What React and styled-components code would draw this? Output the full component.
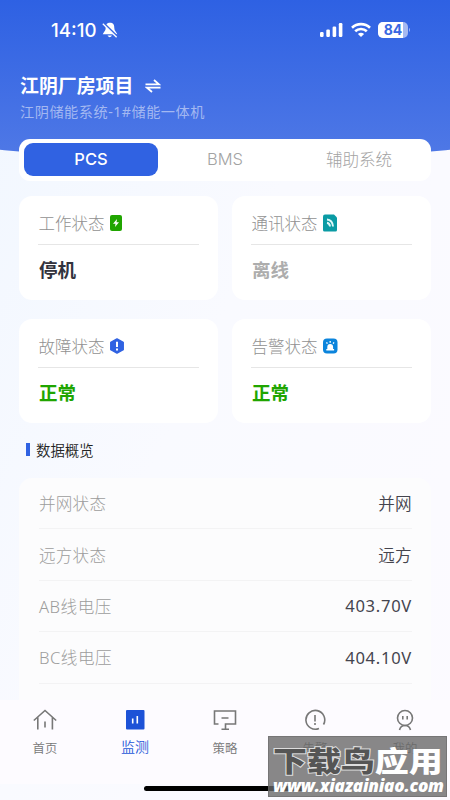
import React from 'react'
import styled, { createGlobalStyle } from 'styled-components'

const GlobalStyle = createGlobalStyle`
  * {
    box-sizing: border-box;
  }

  body {
    margin: 0;
    font-family: "Noto Sans", "Noto Sans CJK SC", sans-serif;
    color: #33333d;
  }
`

const Main = styled.main`
  position: relative;
  display: flex;
  flex-direction: column;
  width: 450px;
  height: 800px;
  overflow: hidden;
  white-space: nowrap;
  background: linear-gradient(115deg, #f1f7ff 0%, #f9faff 45%, #fcfaff 100%);
`

const Header = styled.header`
  flex: none;
  height: 161px;
  margin: 0 -150px;
  padding: 0 170px;
  background: linear-gradient(180deg, #2e61e3 0%, #5079e6 100%);
  clip-path: ellipse(2250px 2250px at 50% -2089px);
`

const StatusBar = styled.div`
  display: flex;
  align-items: center;
  height: 60px;
  padding: 0 19px 0 31px;
  color: white;
`

const Clock = styled.span`
  width: 47px;
  margin-right: 4px;
  font-family: Inter, "Liberation Sans", sans-serif;
  font-size: 18.7px;
  font-weight: 500;
`

const StatusIcons = styled.div`
  display: flex;
  align-items: center;
  gap: 7px;
  margin-left: auto;
`

const Project = styled.h1`
  display: flex;
  align-items: center;
  gap: 12px;
  height: 28px;
  margin: 12px 0 0;
  font-size: 18.9px;
  line-height: 28px;
  color: white;
`

const System = styled.p`
  margin: 1px 0 0;
  font-size: 14.2px;
  line-height: 22px;
  letter-spacing: 0.5px;
  color: #a3b8f1;
`

const Content = styled.div`
  flex: 1;
  min-height: 0;
  margin-top: -22px;
  padding: 0 19px;
  overflow: hidden;
  z-index: 1;
`

const Tabs = styled.div`
  display: grid;
  grid-template-columns: repeat(3, 134px);
  height: 42px;
  padding: 4px 5px 5px;
  border-radius: 11px;
  background: white;
`

const Tab = styled.button`
  padding: 0 0 2px;
  border: 0;
  border-radius: 9px;
  font-family: Inter, "Noto Sans CJK SC", sans-serif;
  font-size: 16.5px;
  font-weight: ${(props) => (props.$active ? 500 : 300)};
  color: ${(props) => (props.$active ? 'white' : '#a3a3a3')};
  background: ${(props) => (props.$active ? '#3062e2' : 'transparent')};
`

const Cards = styled.div`
  display: grid;
  grid-template-columns: 199px 199px;
  gap: 19px 14px;
  margin-top: 15px;
`

const Card = styled.section`
  height: 104px;
  padding: 12px 19px 0;
  border-radius: 13px;
  background: white;
`

const CardLabel = styled.div`
  display: flex;
  align-items: center;
  gap: 4px;
  height: 30px;
  padding-left: 0.5px;
  font-size: 16.5px;
  font-weight: 300;
  color: #919191;
`

const CardValue = styled.div`
  margin-top: 6px;
  padding: 11px 0 0 1px;
  border-top: 1px solid #e6e6e6;
  font-size: 18.5px;
  font-weight: 700;
  line-height: 28px;
  color: ${(props) => props.$color};
`

const SectionTitle = styled.h2`
  display: flex;
  align-items: center;
  gap: 6px;
  height: 24px;
  margin: 14px 0 0;
  padding-left: 7px;
  font-size: 14.4px;
  font-weight: 350;
  color: #222;

  &::before {
    content: '';
    width: 4px;
    height: 13px;
    background: #3062e2;
  }
`

const List = styled.div`
  margin-top: 17px;
  padding: 0 19px 0 20px;
  border-radius: 13px 13px 0 0;
  background: #fcfcfd;
`

const Row = styled.div`
  display: flex;
  align-items: center;
  justify-content: space-between;
  height: 51.4px;
  border-bottom: 1px solid #f3f3f4;
  font-size: 16.6px;
  color: #44444e;
`

const RowLabel = styled.span`
  font-weight: 300;
  letter-spacing: ${(props) => (props.$numeric ? '0.5px' : '0.2px')};
  color: #9c9c9c;
`

const RowValue = styled.span`
  font-weight: ${(props) => (props.$numeric ? 400 : 350)};
  letter-spacing: ${(props) => (props.$numeric ? '0.7px' : '0.3px')};
`

const Nav = styled.nav`
  display: grid;
  grid-template-columns: repeat(5, 90px);
  flex: none;
  height: 84px;
  padding-top: 9px;
  background: #fdfbff;
`

const NavItem = styled.div`
  display: flex;
  flex-direction: column;
  align-items: center;
  font-size: ${(props) => (props.$active ? '14px' : '12.4px')};
  font-weight: 350;
  line-height: 24px;
  color: ${(props) => (props.$active ? '#2457d8' : '#777')};

  span {
    margin-top: ${(props) => (props.$active ? '4px' : '6px')};
  }
`

const HomeBar = styled.div`
  flex: none;
  width: 162px;
  height: 5px;
  margin: 2px auto 9px;
  border-radius: 3px;
  background: black;
`

const Watermark = styled.div`
  position: absolute;
  z-index: 2;
  left: 268px;
  top: 736px;
  width: 179px;
  height: 61px;
  background: rgba(104, 104, 104, 0.79);
  border: 1px solid rgba(100, 100, 100, 0.5);
`

const Brand = styled.div`
  width: 141px;
  height: 40px;
  margin-left: 4px;
  font-family: "Noto Sans CJK SC", sans-serif;
  font-size: 28.5px;
  font-weight: 900;
  line-height: 45px;
  color: white;
  transform: scaleX(1.19);
  transform-origin: left;

  span {
    color: #555;
    paint-order: stroke fill;
    -webkit-text-stroke: 2px #ddd;
  }
`

const Site = styled.div`
  padding-left: 4px;
  font-family: "Open Sans", sans-serif;
  font-size: 17.2px;
  font-style: italic;
  font-weight: 800;
  line-height: 18px;
  letter-spacing: -0.25px;
  color: white;
`

const line = {
  fill: 'none',
  stroke: 'currentColor',
  strokeWidth: 1.6,
}

const BellOff = () => (
  <svg width="16" height="17" viewBox="0 0 16 17">
    <path d="M8 .8C4.500.8 3.700 3 3.700 6c0 3-2 3.700-3 6.300h14.600c-1-2.600-3-3.300-3-6.300 0-3-.800-5.200-4.300-5.200z" fill="white" />
    <path d="M5.500 13.500h4.500q-2.200 3.400-4.500 0" fill="white" />
    <path d="M1.700 1.300l14 13.500" stroke="#3968e2" strokeWidth="2" />
    <path d="M.8 1.800l13.800 13.500" stroke="white" strokeWidth="1.300" />
  </svg>
)

const Signal = () => (
  <svg width="24" height="16" viewBox="0 0 24 16" fill="white">
    <rect x="0" y="10" width="3.6" height="5" rx="1.2" />
    <rect x="6.3" y="7.5" width="3.6" height="7.5" rx="1.2" />
    <rect x="12.6" y="4.5" width="3.6" height="10.5" rx="1.2" />
    <rect x="18.8" y="1" width="3.6" height="14" rx="1.2" />
  </svg>
)

const Wifi = () => (
  <svg width="20" height="16" viewBox="0 0 20 16" fill="none" stroke="white" strokeWidth="2.6">
    <path d="M1 5.7a13 13 0 0 1 18 0" />
    <path d="M4.2 9.3a8.3 8.3 0 0 1 11.6 0" />
    <path d="M6.9 12q3.1-2.4 6.2 0L10 15z" fill="white" stroke="none" />
  </svg>
)

const Battery = () => (
  <svg width="33" height="16" viewBox="0 0 33 16">
    <rect width="30" height="16" rx="5" fill="#a5b9f1" />
    <path d="M5 0h20v16H5a5 5 0 0 1-5-5V5a5 5 0 0 1 5-5z" fill="white" />
    <path d="M31 5.7q2 2.2 0 4.4z" fill="#a5b9f1" />
    <text x="15" y="13.1" textAnchor="middle" fontFamily="Inter" fontSize="14" fontWeight="700" fill="#3968e2">84</text>
  </svg>
)

const Swap = () => (
  <svg width="16" height="14" viewBox="0 0 16 14" fill="none" stroke="white" strokeWidth="1.8">
    <path d="M.5 5.4h13.500L9 1M15.500 8.700H2L7 13" />
  </svg>
)

const WorkIcon = () => (
  <svg width="14" height="16" viewBox="0 0 14 16">
    <rect x="1" width="12" height="16" rx="2" fill="#20a500" />
    <path d="M8 4L4 8.7h2.5L6 12l4-4.8H7.5z" fill="white" />
  </svg>
)

const LinkIcon = () => (
  <svg width="16" height="18" viewBox="0 0 16 18">
    <path d="M3 .5h9l3 3V16q0 1.5-1.5 1.5h-11Q1 17.500 1 16V2.500Q1 .5 3 .5z" fill="#0a9ba4" />
    <path d="M5 5.500q5.500.5 6 7M5 8.700q2.700.5 3 3.800" fill="none" stroke="#dff8f8" strokeWidth="1.9" />
  </svg>
)

const FaultIcon = () => (
  <svg width="16" height="16" viewBox="0 0 16 16">
    <path d="M8 .9l6.200 3.400v7.400L8 15.100l-6.200-3.400V4.300z" fill="#3062e2" stroke="#3062e2" strokeWidth="1.500" strokeLinejoin="round" />
    <path d="M8 3.800v5.200M8 10.500v2" stroke="white" strokeWidth="2" />
  </svg>
)

const AlarmIcon = () => (
  <svg width="16" height="16" viewBox="0 0 16 16">
    <rect x="1" y="0.500" width="14.500" height="15" rx="4" fill="#0b84dc" />
    <path d="M5.300 11V9a2.900 2.900 0 0 1 5.800 0v2h1v1.400H4.300V11z" fill="white" />
    <path d="M8.200 3v1.700M4.500 4.300l.9 1.300M12 4.300l-.9 1.300" stroke="white" strokeWidth="1.300" />
  </svg>
)

const HomeIcon = () => (
  <svg width="24" height="22" viewBox="0 0 24 22" {...line}>
    <path d="M.8 11.500L12 1.500l11.200 10M4.800 8.500V20.500M19.400 8.500V20.500M12 12.500V18.500" />
  </svg>
)

const MonitorIcon = () => (
  <svg width="20" height="22" viewBox="0 0 20 22">
    <rect x="1" y="1" width="18.500" height="19.500" rx="1" fill="#1d52d7" />
    <path d="M7.700 9.500v5M12.300 7v7.500" stroke="white" strokeWidth="1.600" />
  </svg>
)

const PolicyIcon = () => (
  <svg width="24" height="22" viewBox="0 0 24 22" {...line}>
    <path d="M5.500 15H1.500V2h21v13h-10v5M8.500 20.300h7.500M8.500 9h7" />
  </svg>
)

const WarnIcon = () => (
  <svg width="22" height="22" viewBox="0 0 22 22" {...line}>
    <path d="M19.500 15.500A9.400 9.400 0 1 0 15 19.500M11 6v6.500M11 14v2" />
  </svg>
)

const MineIcon = () => (
  <svg width="22" height="22" viewBox="0 0 22 22" {...line}>
    <circle cx="11" cy="9" r="7.500" />
    <path d="M8.800 7v3.500M13.200 7v3.500M5.500 21q1-4.500 5.500-4.500t5.500 4.500" />
  </svg>
)

const tabs = ['PCS', 'BMS', '辅助系统']

const cards = [
  { label: '工作状态', value: '停机', color: '#33333d', icon: <WorkIcon /> },
  { label: '通讯状态', value: '离线', color: '#adadad', icon: <LinkIcon /> },
  { label: '故障状态', value: '正常', color: '#20a500', icon: <FaultIcon /> },
  { label: '告警状态', value: '正常', color: '#20a500', icon: <AlarmIcon /> },
]

const rows = [
  { label: '并网状态', value: '并网' },
  { label: '远方状态', value: '远方' },
  { label: 'AB线电压', value: '403.70V', numeric: true },
  { label: 'BC线电压', value: '404.10V', numeric: true },
]

const navItems = [
  { label: '首页', icon: <HomeIcon /> },
  { label: '监测', icon: <MonitorIcon />, active: true },
  { label: '策略', icon: <PolicyIcon /> },
  { label: '告警', icon: <WarnIcon /> },
  { label: '我的', icon: <MineIcon /> },
]

class App extends React.Component {
  state = {
    tab: 'PCS',
  }

  onClickTab = (tab) => {
    this.setState({ tab })
  }

  render() {
    return (
      <Main>
        <GlobalStyle />
        <Header>
          <StatusBar>
            <Clock>14:10</Clock>
            <BellOff />
            <StatusIcons>
              <Signal />
              <Wifi />
              <Battery />
            </StatusIcons>
          </StatusBar>
          <Project>江阴厂房项目<Swap /></Project>
          <System>江阴储能系统-1#储能一体机</System>
        </Header>
        <Content>
          <Tabs>
            {tabs.map((tab) => (
              <Tab key={tab} $active={tab === this.state.tab} onClick={() => this.onClickTab(tab)}>{tab}</Tab>
            ))}
          </Tabs>
          <Cards>
            {cards.map((card) => (
              <Card key={card.label}>
                <CardLabel>{card.label}{card.icon}</CardLabel>
                <CardValue $color={card.color}>{card.value}</CardValue>
              </Card>
            ))}
          </Cards>
          <SectionTitle>数据概览</SectionTitle>
          <List>
            {rows.map((row) => (
              <Row key={row.label}>
                <RowLabel $numeric={row.numeric}>{row.label}</RowLabel>
                <RowValue $numeric={row.numeric}>{row.value}</RowValue>
              </Row>
            ))}
            <Row />
          </List>
        </Content>
        <Nav>
          {navItems.map((item) => (
            <NavItem key={item.label} $active={item.active}>
              {item.icon}
              <span>{item.label}</span>
            </NavItem>
          ))}
        </Nav>
        <HomeBar />
        <Watermark>
          <Brand><span>下载鸟</span>应用</Brand>
          <Site>www.xiazainiao.com</Site>
        </Watermark>
      </Main>
    )
  }
}

export default App
